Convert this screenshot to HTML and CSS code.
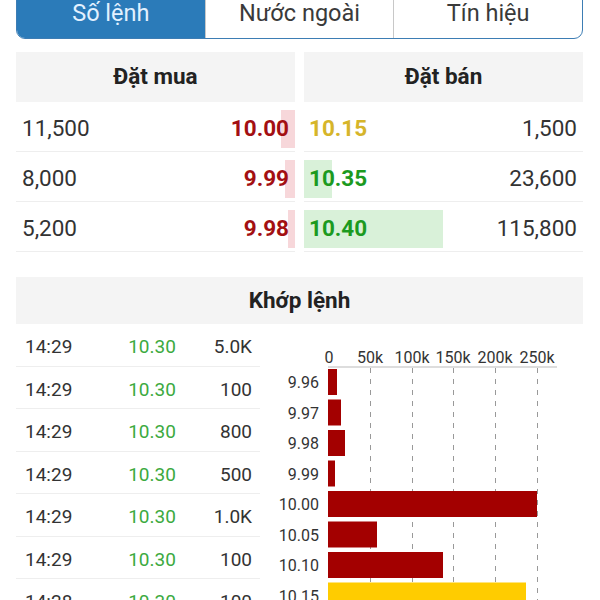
FILE: index.html
```html
<!DOCTYPE html>
<html lang="vi">
<head>
    <meta charset="UTF-8">
    <meta name="viewport" content="width=device-width, initial-scale=1.0">
    <title>Số lệnh</title>
    <link rel="stylesheet" href="styles.css">
</head>
<body>
    <div class="tabs">
        <div class="tab active">Số lệnh</div>
        <div class="tab">Nước ngoài</div>
        <div class="tab">Tín hiệu</div>
    </div>

    <div class="book">
        <div class="side">
            <div class="head">Đặt mua</div>
            <div class="row">
                <span class="bar bar-buy" style="width: 14px"></span>
                <span class="qty">11,500</span>
                <span class="price red">10.00</span>
            </div>
            <div class="row">
                <span class="bar bar-buy" style="width: 10px"></span>
                <span class="qty">8,000</span>
                <span class="price red">9.99</span>
            </div>
            <div class="row">
                <span class="bar bar-buy" style="width: 7px"></span>
                <span class="qty">5,200</span>
                <span class="price red">9.98</span>
            </div>
        </div>
        <div class="side sell">
            <div class="head">Đặt bán</div>
            <div class="row">
                <span class="price yellow">10.15</span>
                <span class="qty">1,500</span>
            </div>
            <div class="row">
                <span class="bar bar-sell" style="width: 28px"></span>
                <span class="price green">10.35</span>
                <span class="qty">23,600</span>
            </div>
            <div class="row">
                <span class="bar bar-sell" style="width: 139px"></span>
                <span class="price green">10.40</span>
                <span class="qty">115,800</span>
            </div>
        </div>
    </div>

    <div class="match">
        <div class="head">Khớp lệnh</div>
        <div class="match-body">
            <div class="trades">
                <div class="trade"><span>14:29</span><span class="t-price">10.30</span><span class="t-vol">5.0K</span></div>
                <div class="trade"><span>14:29</span><span class="t-price">10.30</span><span class="t-vol">100</span></div>
                <div class="trade"><span>14:29</span><span class="t-price">10.30</span><span class="t-vol">800</span></div>
                <div class="trade"><span>14:29</span><span class="t-price">10.30</span><span class="t-vol">500</span></div>
                <div class="trade"><span>14:29</span><span class="t-price">10.30</span><span class="t-vol">1.0K</span></div>
                <div class="trade"><span>14:29</span><span class="t-price">10.30</span><span class="t-vol">100</span></div>
                <div class="trade"><span>14:28</span><span class="t-price">10.30</span><span class="t-vol">100</span></div>
            </div>
            <svg class="chart" width="323" height="300" viewBox="0 0 323 300">
                <g class="axis-label" text-anchor="middle">
                    <text x="69" y="39">0</text>
                    <text x="110" y="39">50k</text>
                    <text x="152" y="39">100k</text>
                    <text x="193" y="39">150k</text>
                    <text x="235" y="39">200k</text>
                    <text x="277" y="39">250k</text>
                </g>
                <line x1="68" y1="43" x2="297" y2="43" stroke="#bbb" stroke-width="1"/>
                <g stroke="#999" stroke-width="1" stroke-dasharray="5 6">
                    <line x1="110.5" y1="44" x2="110.5" y2="300"/>
                    <line x1="152.5" y1="44" x2="152.5" y2="300"/>
                    <line x1="193.5" y1="44" x2="193.5" y2="300"/>
                    <line x1="235.5" y1="44" x2="235.5" y2="300"/>
                    <line x1="277.5" y1="44" x2="277.5" y2="300"/>
                </g>
                <g fill="#a30000">
                    <rect x="68" y="45" width="9" height="26"/>
                    <rect x="68" y="75.5" width="13" height="26"/>
                    <rect x="68" y="106" width="17" height="26"/>
                    <rect x="68" y="136.5" width="7" height="26"/>
                    <rect x="68" y="167" width="209" height="26"/>
                    <rect x="68" y="197.5" width="49" height="26"/>
                    <rect x="68" y="228" width="115" height="26"/>
                </g>
                <rect x="68" y="258.5" width="198" height="26" fill="#ffcc00"/>
                <g class="price-label" text-anchor="end">
                    <text x="59" y="64">9.96</text>
                    <text x="59" y="94.5">9.97</text>
                    <text x="59" y="125">9.98</text>
                    <text x="59" y="155.5">9.99</text>
                    <text x="59" y="186">10.00</text>
                    <text x="59" y="216.5">10.05</text>
                    <text x="59" y="247">10.10</text>
                    <text x="59" y="277.5">10.15</text>
                </g>
            </svg>
        </div>
    </div>
</body>
</html>
```

FILE: styles.css
```css
body {
    margin: 0;
    font-family: Roboto, "Liberation Sans", sans-serif;
    color: #333;
    background: #fff;
}
.tabs {
    display: flex;
    height: 50px;
    margin: -13px 17px 0 16px;
    border: 1px solid #3d7db4;
    border-radius: 9px;
    overflow: hidden;
}
.tab {
    flex: 1;
    display: flex;
    align-items: center;
    justify-content: center;
    font-size: 23.5px;
    color: #3a3a3a;
    border-left: 1px solid #c8c8c8;
}
.tab:first-child {
    border-left: none;
}
.tab.active {
    background-color: #2b7bb9;
    color: #e2f1ff;
}
.book {
    display: flex;
    gap: 9px;
    margin: 13px 17px 0 16px;
}
.side {
    flex: 1;
}
.head {
    height: 50px;
    box-sizing: border-box;
    padding-bottom: 3px;
    display: flex;
    align-items: center;
    justify-content: center;
    background-color: #f4f4f4;
    font-size: 22.5px;
    font-weight: bold;
    color: #222;
}
.row {
    position: relative;
    height: 50px;
    box-sizing: border-box;
    padding: 3px 6px 0 6px;
    display: flex;
    align-items: center;
    justify-content: space-between;
    border-bottom: 1px solid #eee;
    font-size: 22.5px;
}
.sell .row {
    padding-left: 5px;
}
.qty, .price {
    position: relative;
}
.price {
    font-weight: bold;
}
.bar {
    position: absolute;
    top: 8px;
    height: 38px;
}
.bar-buy {
    right: 0;
    background-color: #f7d7da;
}
.bar-sell {
    left: 0;
    background-color: #d9f1d9;
}
.red {
    color: #a30f12;
}
.yellow {
    color: #d6b52a;
}
.green {
    color: #1c9a1f;
}
.match {
    margin: 25px 17px 0 16px;
}
.match .head {
    height: 47px;
    padding-bottom: 2px;
}
.match-body {
    display: flex;
}
.trades {
    width: 244px;
    flex-shrink: 0;
}
.trade {
    height: 42.5px;
    box-sizing: border-box;
    padding: 4px 8px 0 9px;
    display: grid;
    grid-template-columns: 97px 60px 1fr;
    align-items: center;
    border-bottom: 1px solid #eee;
    font-size: 19px;
}
.t-price {
    text-align: center;
    color: #3caa3f;
}
.t-vol {
    text-align: right;
}
.chart {
    display: block;
    overflow: visible;
}
.axis-label text {
    font-size: 16px;
    fill: #333;
}
.price-label text {
    font-size: 16px;
    fill: #333;
}
```
